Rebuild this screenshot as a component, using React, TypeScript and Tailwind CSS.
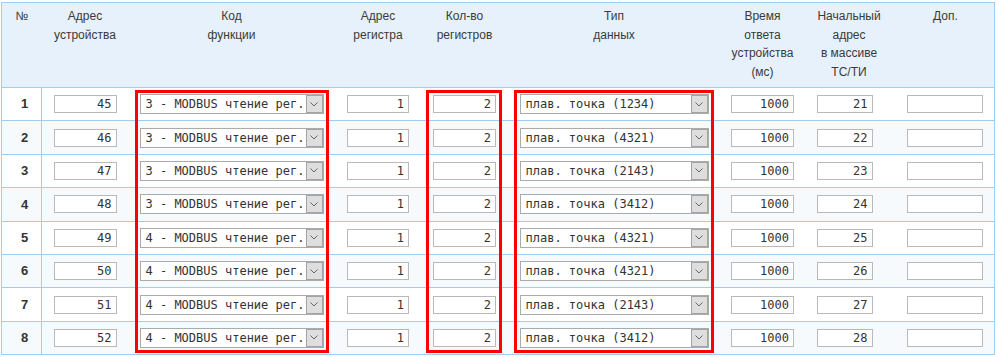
import React from 'react';

const rows = [
  { n: 1, addr: 45, fn: 3, type: '1234', start: 21 },
  { n: 2, addr: 46, fn: 3, type: '4321', start: 22 },
  { n: 3, addr: 47, fn: 3, type: '2143', start: 23 },
  { n: 4, addr: 48, fn: 3, type: '3412', start: 24 },
  { n: 5, addr: 49, fn: 4, type: '4321', start: 25 },
  { n: 6, addr: 50, fn: 4, type: '4321', start: 26 },
  { n: 7, addr: 51, fn: 4, type: '2143', start: 27 },
  { n: 8, addr: 52, fn: 4, type: '3412', start: 28 },
];

const cols =
  'grid grid-cols-[40px_86px_207px_86px_87px_212px_85px_84px_105px]';

const mono = { fontFamily: '"DejaVu Sans Mono", "Liberation Mono", monospace' };

const Field = ({ value, w }: { value: string; w: string }) => (
  <input
    readOnly
    value={value}
    style={mono}
    className={`${w} h-[18px] border border-[#b9b9b9] bg-white pr-[4px] text-right text-[12px] text-[#333] outline-none`}
  />
);

const Select = ({ text, w }: { text: string; w: string }) => (
  <div
    className={`${w} flex h-[20px] items-center border border-[#ababab] bg-white`}
  >
    <span style={mono} className="flex-1 whitespace-pre pl-[5px] text-[12px] leading-none text-[#333]">
      {text}
    </span>
    <span className="flex h-[18px] w-[17px] items-center justify-center border border-[#a3a3a3] bg-[#dedede]">
      <svg width="8" height="5" viewBox="0 0 8 5">
        <path d="M0.5 0.5 L4 4 L7.5 0.5" fill="none" stroke="#666" strokeWidth="1" />
      </svg>
    </span>
  </div>
);

const headers: [string[], string][] = [
  [['№'], ''],
  [['Адрес', 'устройства'], ''],
  [['Код', 'функции'], ''],
  [['Адрес', 'регистра'], ''],
  [['Кол-во', 'регистров'], ''],
  [['Тип', 'данных'], ''],
  [['Время', 'ответа', 'устройства', '(мс)'], ''],
  [['Начальный', 'адрес', 'в массиве', 'ТС/ТИ'], 'pl-[4px]'],
  [['Доп.'], 'pl-[8px]'],
];

export default function App() {
  return (
    <div
      className="relative h-[357px] w-[999px] overflow-hidden bg-white"
      style={{ fontFamily: '"Liberation Sans", Arial, sans-serif' }}
    >
      <div className="ml-px mt-[2px] w-[994px] border-x border-t border-[#a3cdef]">
        <div className={`${cols} h-[85px] border-b border-[#a3cdef] bg-[#e6f1fb]`}>
          {headers.map(([lines, extra], i) => (
            <div
              key={i}
              className={`pt-[4px] text-center text-[12px] leading-[18.5px] text-[#3a3a3a] ${extra}`}
            >
              {lines.map((l) => (
                <div key={l}>{l}</div>
              ))}
            </div>
          ))}
        </div>

        {rows.map((r) => (
          <div
            key={r.n}
            className={`${cols} h-[33.4px] items-stretch border-b border-[#a3cdef] ${
              r.n % 2 === 0 ? 'bg-[#f6fafd]' : 'bg-white'
            }`}
          >
            <div className="flex items-center justify-center border-r border-[#a3cdef] pl-[6px] text-[13px] font-bold text-[#333]">
              {r.n}
            </div>
            <div className="flex items-center justify-center">
              <Field value={String(r.addr)} w="w-[63px]" />
            </div>
            <div className="flex items-center justify-center">
              <Select text={`${r.fn} - MODBUS чтение рег.`} w="w-[184px]" />
            </div>
            <div className="flex items-center justify-center">
              <Field value="1" w="w-[62px]" />
            </div>
            <div className="flex items-center justify-center">
              <Field value="2" w="w-[63px]" />
            </div>
            <div className="flex items-center justify-center">
              <Select text={`плав. точка (${r.type})`} w="w-[189px]" />
            </div>
            <div className="flex items-center justify-center">
              <Field value="1000" w="w-[63px]" />
            </div>
            <div className="flex items-center justify-center pr-[5px]">
              <Field value={String(r.start)} w="w-[56px]" />
            </div>
            <div className="flex items-center justify-center pl-[6px]">
              <Field value="" w="w-[76px]" />
            </div>
          </div>
        ))}
      </div>

      <div className="absolute left-[135px] top-[90px] h-[263px] w-[194px] border-[3px] border-[#ff0000]" />
      <div className="absolute left-[426px] top-[90px] h-[263px] w-[76px] border-[3px] border-[#ff0000]" />
      <div className="absolute left-[514px] top-[90px] h-[263px] w-[200px] border-[3px] border-[#ff0000]" />
    </div>
  );
}
